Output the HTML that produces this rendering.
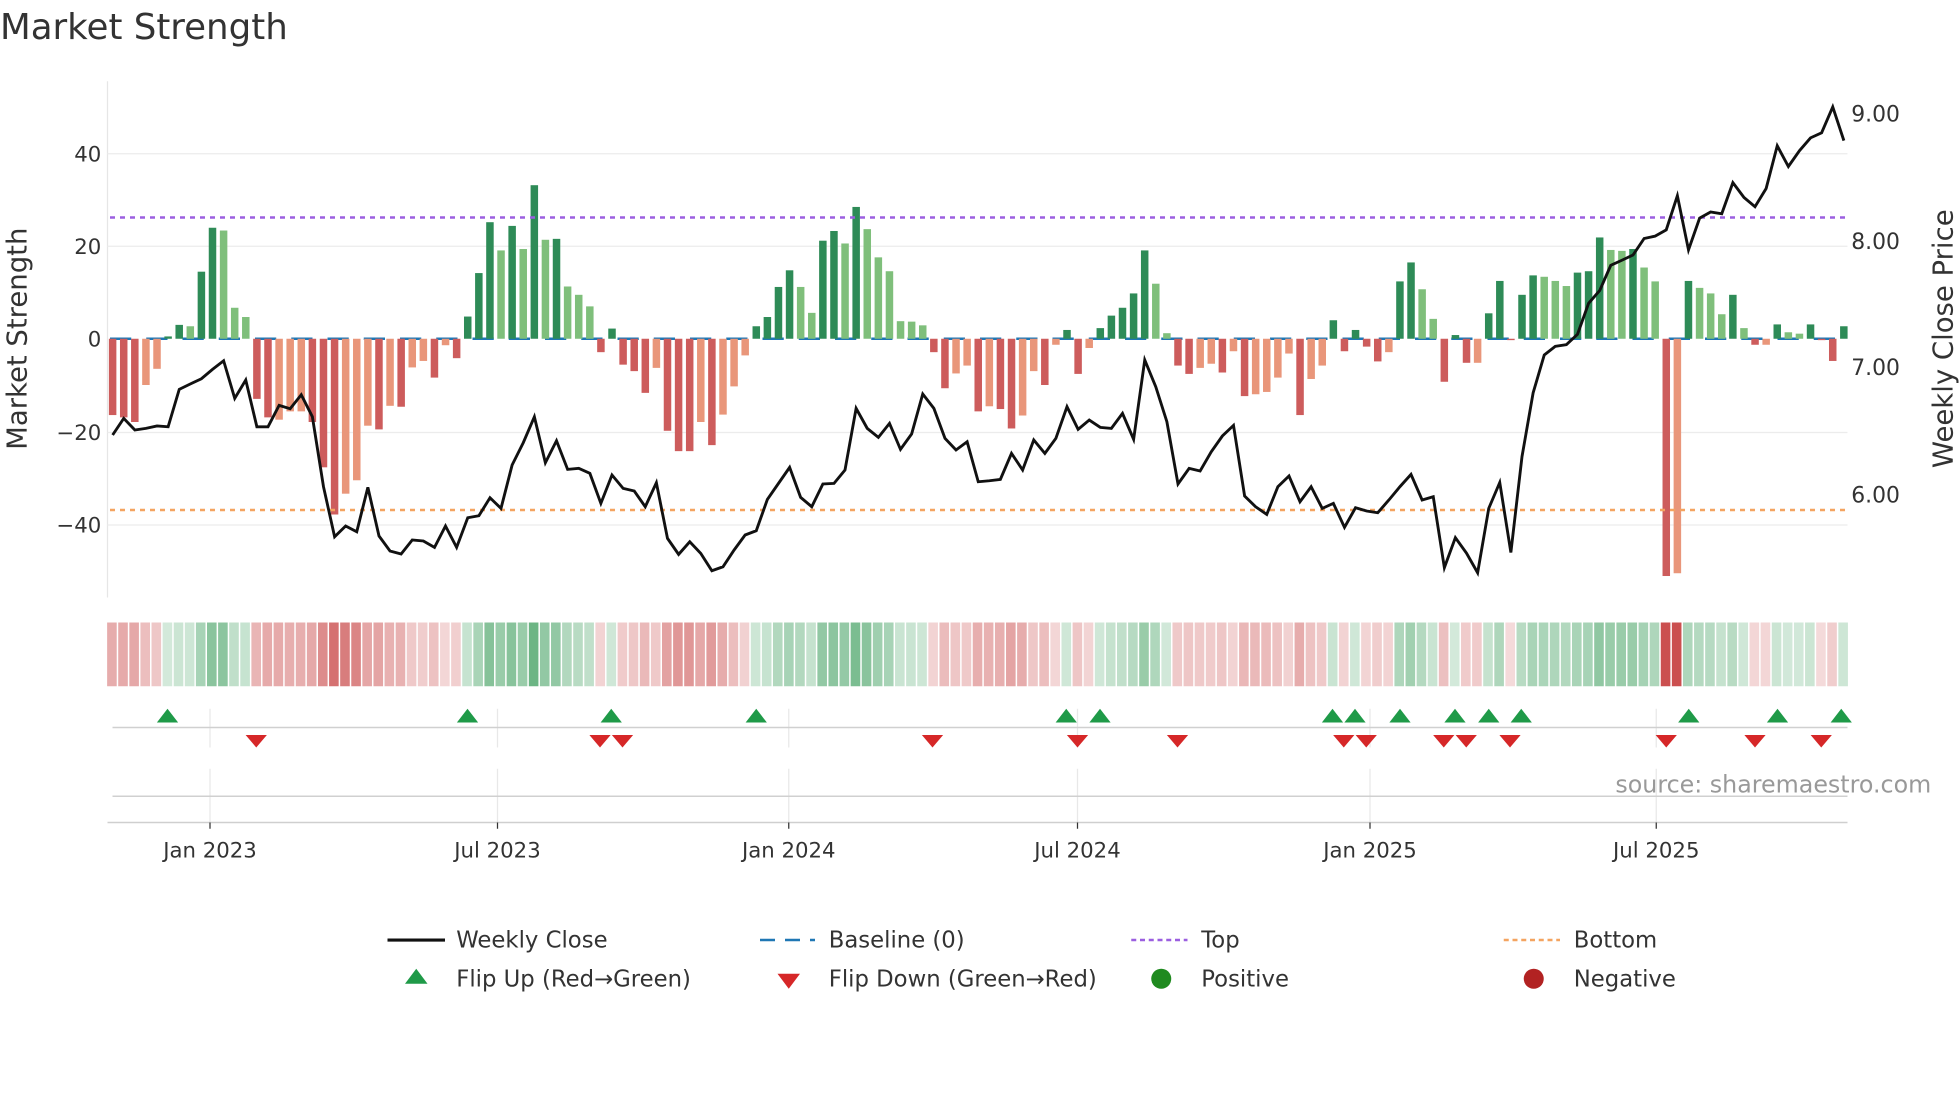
<!DOCTYPE html>
<html><head><meta charset="utf-8"><style>
html,body{margin:0;padding:0;background:#fff;}
svg{display:block;font-family:"DejaVu Sans","Liberation Sans",sans-serif;}
</style></head><body>
<svg id="s" width="1960" height="1102" viewBox="0 0 1568 881.6" xmlns="http://www.w3.org/2000/svg">
<rect width="1568" height="882" fill="#fff"/>
<text x="0" y="31" font-size="28.5" fill="#333">Market Strength</text>
<line x1="86" y1="65" x2="86" y2="478" stroke="#e6e6e6" stroke-width="1"/>
<g stroke="#ececec" stroke-width="1">
<line x1="86" y1="123" x2="1478" y2="123"/><line x1="86" y1="197" x2="1478" y2="197"/>
<line x1="86" y1="346" x2="1478" y2="346"/><line x1="86" y1="420" x2="1478" y2="420"/>
</g>
<g font-size="17" fill="#333" text-anchor="end">
<text x="81" y="129">40</text><text x="81" y="203">20</text><text x="81" y="277">0</text>
<text x="81" y="352">−20</text><text x="81" y="426">−40</text>
</g>
<g font-size="17.5" fill="#333">
<text x="1481" y="97">9.00</text><text x="1481" y="199">8.00</text><text x="1481" y="300">7.00</text><text x="1481" y="402">6.00</text>
</g>
<text transform="translate(21,271) rotate(-90)" font-size="22" fill="#333" text-anchor="middle">Market Strength</text>
<text transform="translate(1562,271) rotate(-90)" font-size="22" fill="#333" text-anchor="middle">Weekly Close Price</text>
<line x1="88" y1="271" x2="1478" y2="271" stroke="#1f77b4" stroke-width="2" stroke-dasharray="17 12"/>
<g id="bars"></g>
<line x1="88" y1="174" x2="1478" y2="174" stroke="#9b5fe0" stroke-width="2" stroke-dasharray="4 4"/>
<line x1="88" y1="408" x2="1478" y2="408" stroke="#f4a460" stroke-width="2" stroke-dasharray="4 4"/>
<polyline id="price" fill="none" stroke="#111" stroke-width="2.3" stroke-linejoin="miter"/>
<g id="heat"></g>
<g stroke="#e8e8e8" stroke-width="1">
<line x1="168" y1="567" x2="168" y2="598"/><line x1="398" y1="567" x2="398" y2="598"/>
<line x1="631" y1="567" x2="631" y2="598"/><line x1="862" y1="567" x2="862" y2="598"/>
<line x1="1096" y1="567" x2="1096" y2="598"/><line x1="1325" y1="567" x2="1325" y2="598"/>
<line x1="168" y1="615" x2="168" y2="658"/><line x1="398" y1="615" x2="398" y2="658"/>
<line x1="631" y1="615" x2="631" y2="658"/><line x1="862" y1="615" x2="862" y2="658"/>
<line x1="1096" y1="615" x2="1096" y2="658"/><line x1="1325" y1="615" x2="1325" y2="658"/>
</g>
<line x1="90" y1="582" x2="1478" y2="582" stroke="#d0d0d0" stroke-width="1.2"/>
<line x1="90" y1="637" x2="1478" y2="637" stroke="#d0d0d0" stroke-width="1.2"/>
<line x1="86" y1="658" x2="1478" y2="658" stroke="#cfcfcf" stroke-width="1.2"/>
<g id="marks"></g>
<text x="1545" y="634" font-size="19" fill="#999" text-anchor="end">source: sharemaestro.com</text>
<g stroke="#333" stroke-width="1">
<line x1="168" y1="658" x2="168" y2="663"/><line x1="398" y1="658" x2="398" y2="663"/>
<line x1="631" y1="658" x2="631" y2="663"/><line x1="862" y1="658" x2="862" y2="663"/>
<line x1="1096" y1="658" x2="1096" y2="663"/><line x1="1325" y1="658" x2="1325" y2="663"/>
</g>
<g font-size="17" fill="#333" text-anchor="middle">
<text x="168" y="686">Jan 2023</text><text x="398" y="686">Jul 2023</text><text x="631" y="686">Jan 2024</text>
<text x="862" y="686">Jul 2024</text><text x="1096" y="686">Jan 2025</text><text x="1325" y="686">Jul 2025</text>
</g>
<g font-size="18.2" fill="#333">
<line x1="310" y1="752" x2="356" y2="752" stroke="#111" stroke-width="2.5"/>
<text x="365" y="758">Weekly Close</text>
<line x1="608" y1="752" x2="652" y2="752" stroke="#1f77b4" stroke-width="2" stroke-dasharray="12 8"/>
<text x="663" y="758">Baseline (0)</text>
<line x1="905" y1="752" x2="950" y2="752" stroke="#9b5fe0" stroke-width="2" stroke-dasharray="4 3"/>
<text x="961" y="758">Top</text>
<line x1="1203" y1="752" x2="1248" y2="752" stroke="#f4a460" stroke-width="2" stroke-dasharray="4 3"/>
<text x="1259" y="758">Bottom</text>
<polygon points="324,787 342,787 333,775" fill="#1f9a48"/>
<text x="365" y="789">Flip Up (Red→Green)</text>
<polygon points="622,779 640,779 631,791" fill="#d62728"/>
<text x="663" y="789">Flip Down (Green→Red)</text>
<circle cx="929" cy="783" r="8" fill="#1f8a1f"/>
<text x="961" y="789">Positive</text>
<circle cx="1227" cy="783" r="8" fill="#b22222"/>
<text x="1259" y="789">Negative</text>
</g>
</svg>
<script>
(function(){
var NS="http://www.w3.org/2000/svg";
var raw="-16.5d,-17d,-18d,-10l,-6.5l,0.5d,3d,2.7l,14.5d,24d,23.4l,6.7l,4.7l,-13d,-17d,-17.5l,-15.7l,-15.7l,-18d,-27.8d,-38d,-33.5l,-30.6l,-18.8l,-19.6d,-14.5l,-14.7d,-6.2l,-4.8l,-8.4d,-1.4l,-4.2d,4.8d,14.2d,25.2d,19.1l,24.4d,19.4l,33.2d,21.4l,21.6d,"+
"11.3l,9.5l,7l,-2.9d,2.2d,-5.6d,-7d,-11.7d,-6.3l,-19.9d,-24.3d,-24.3d,-18l,-23d,-16.4l,-10.3l,-3.6l,2.7d,4.7d,11.2d,14.8d,11.2l,5.6l,21.2d,23.3d,20.6l,28.5d,23.7l,17.6l,14.6l,3.8l,3.7l,2.9l,-2.9d,-10.7d,-7.5l,-5.8l,-15.7d,-14.6l,-15.2d,"+
"-19.4d,-16.6l,-7l,-10d,-1.3l,1.9d,-7.6d,-2l,2.3d,5d,6.7d,9.8d,19.1d,11.9l,1.2l,-5.8d,-7.6d,-6.3l,-5.4l,-7.3d,-2.7l,-12.4d,-12l,-11.5l,-8.4l,-3.2l,-16.5d,-8.7l,-5.8l,4d,-2.7d,1.9d,-1.7d,-4.9d,-2.9l,12.4d,16.5d,10.7l,4.3l,"+
"-9.3d,0.8d,-5.2d,-5.2l,5.5d,12.5d,-0.3d,9.5d,13.7d,13.4l,12.5l,11.4l,14.3d,14.6d,21.9d,19.2l,19l,19.4d,15.4l,12.4l,-51.3d,-50.7l,12.5d,11l,9.8l,5.3l,9.5d,2.3l,-1.3d,-1.3l,3.1d,1.4l,1.1l,3.1d,-0.3d,-4.8d,2.7d";
var items=raw.split(",");
var P=8.878,X0=90.1,U=3.7,Z=271;
var bars=document.getElementById("bars"),heat=document.getElementById("heat");
function el(t,a,p){var e=document.createElementNS(NS,t);for(var k in a)e.setAttribute(k,a[k]);p.appendChild(e);return e;}
items.forEach(function(s,i){
  var d=s.slice(-1)=="d",v=parseFloat(s);
  var x=X0+P*i;
  var col=v>=0?(d?"#2e8b57":"#7fbf7b"):(d?"#cd5c5c":"#e9967a");
  var h=Math.abs(v)*U; var y=v>=0?Z-h:Z;
  el("rect",{x:x-3,y:y,width:6,height:Math.max(h,0.8),fill:col},bars);
  var a=Math.min(0.8,0.2+0.45*Math.abs(v)/30); if(Math.abs(v)>45)a=0.95;
  var hc=v>=0?"rgba(46,150,80,"+a.toFixed(2)+")":"rgba(200,70,70,"+a.toFixed(2)+")";
  el("rect",{x:x-4.4,y:498,width:P-1.2,height:51,fill:hc},heat);
});
var z1=[885,835,870,865,858,860,748,732,716,688,662,775,720,860,860,796,806,764,830,1040,1190,1158,1175,1042,1188,1233,1242,1200,1203,1222,1158,1222,1133,1127,1073,1105,975,908,830,968,902,
988,985,1000,1090,1005,1045,1053,1100,1028,1195,1243,1205,1240,1292,1280,1230,1185,1172,1078,1030,982,1072,1100,1032,1030,990,805,865,892,850,928,882,762,805,895,930,905,1025,1022,1018,
940,990,900,940,895,800,868,840,862,865,820,898,660,740,845,1032,985,993,935,888,856,1068,1100,1123,1040,1008,1085,1040,1105,1090,1162,1103,1113,1118,1080,1040,1003,1080,1070];
var z4=[1472,1385,1430,1487,1300,1225,1428,1150,965,855,830,825,795,705,668,595,580,565,517,510,492,393,550,458,440,445,355,398,425,372,248,308,262,225,210,135,233];
var pts=[];
z1.forEach(function(zy,i){pts.push((X0+P*i).toFixed(1)+","+(112+zy*0.2667).toFixed(1));});
z4.forEach(function(zy,j){var i=120+j;pts.push((X0+P*i).toFixed(1)+","+(91+(zy-155)*0.2757).toFixed(1));});
document.getElementById("price").setAttribute("points",pts.join(" "));
var m=document.getElementById("marks");
[134,374,489,605,853,880,1066,1084,1120,1164,1191,1217,1351,1422,1473].forEach(function(x){
  el("polygon",{points:(x-8.5)+",578 "+(x+8.5)+",578 "+x+",567",fill:"#1f9a48"},m);});
[205,480,498,746,862,942,1075,1093,1155,1173,1208,1333,1404,1457].forEach(function(x){
  el("polygon",{points:(x-8.5)+",588 "+(x+8.5)+",588 "+x+",598",fill:"#d62728"},m);});
})();
</script>
</body></html>
